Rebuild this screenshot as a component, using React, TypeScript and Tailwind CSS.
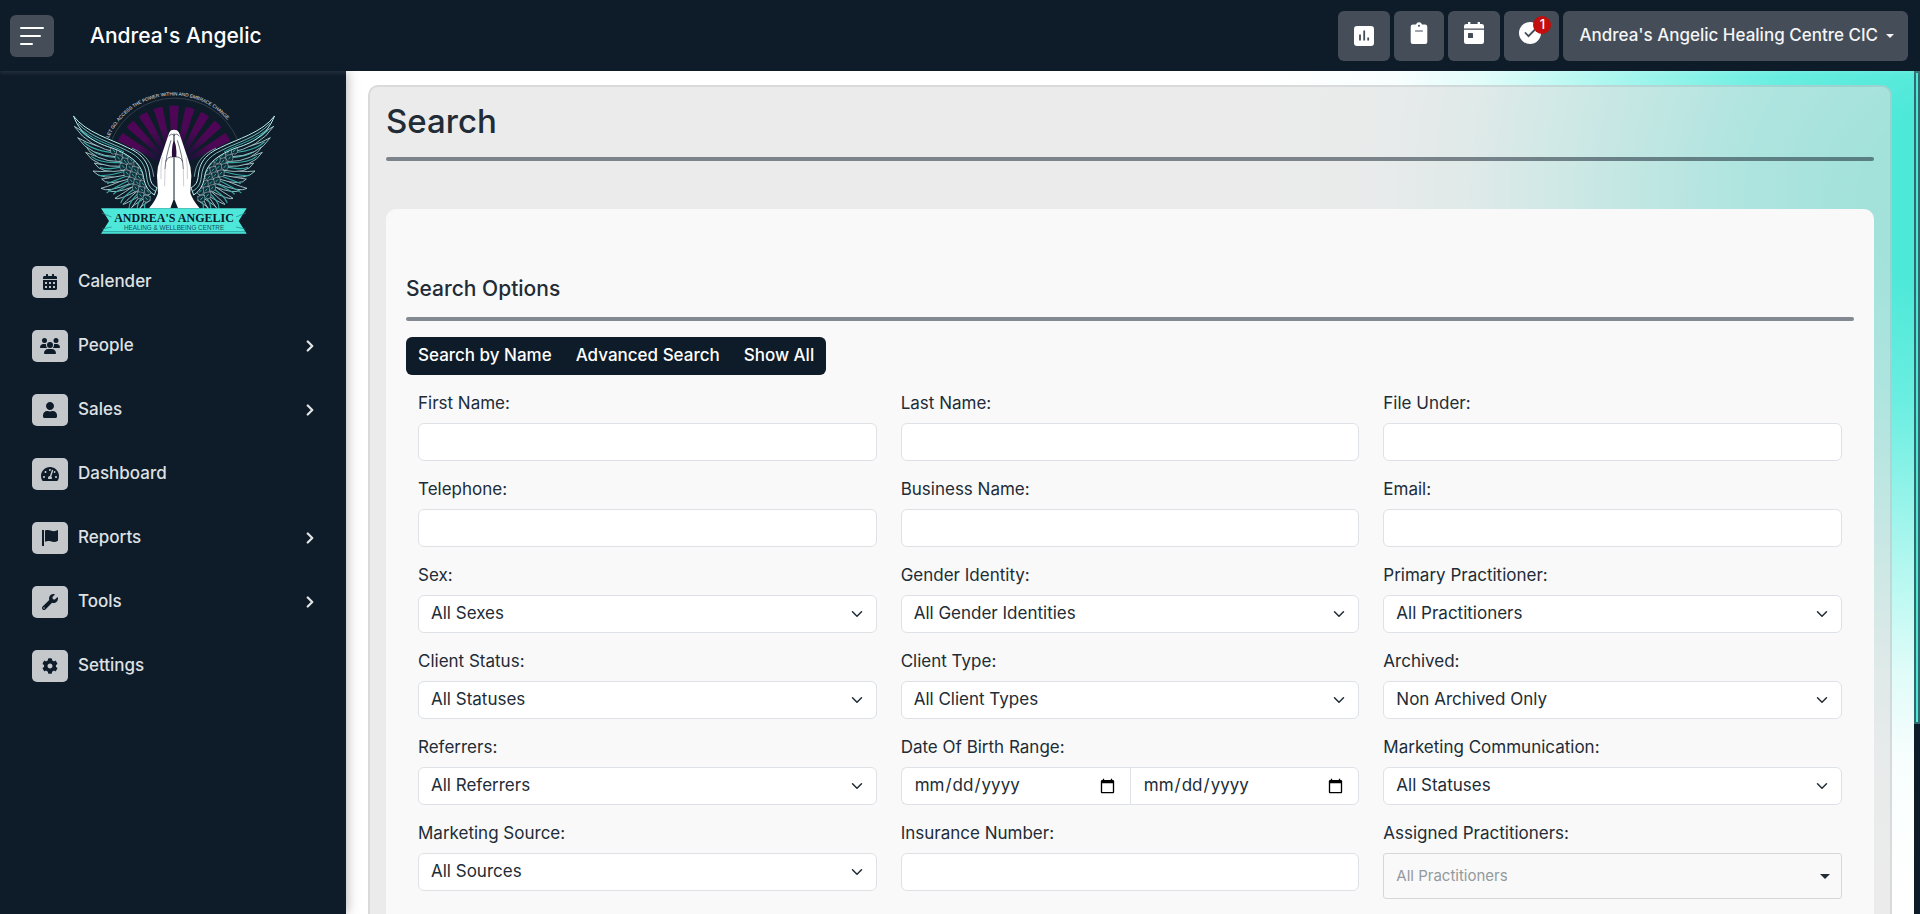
import { useState } from "react";
import type { ReactNode } from "react";
import { FaCalendarAlt, FaCog, FaTachometerAlt, FaUser, FaWrench } from "react-icons/fa";
import { FaUsers } from "react-icons/fa6";

type NavItem = { label: string; icon: ReactNode; hasChildren?: boolean };

type FieldDef = {
  id: string;
  label: string;
  type: "text" | "select" | "dates" | "multi";
  value?: string;
};

const NAV_ITEMS: NavItem[] = [
  { label: "Calender", icon: <FaCalendarAlt /> },
  { label: "People", icon: <FaUsers className="text-xl" />, hasChildren: true },
  { label: "Sales", icon: <FaUser />, hasChildren: true },
  { label: "Dashboard", icon: <FaTachometerAlt className="text-lg" /> },
  { label: "Reports", icon: <FlagIcon />, hasChildren: true },
  { label: "Tools", icon: <FaWrench />, hasChildren: true },
  { label: "Settings", icon: <FaCog /> },
];

const FIELDS: FieldDef[] = [
  { id: "first-name", label: "First Name:", type: "text" },
  { id: "last-name", label: "Last Name:", type: "text" },
  { id: "file-under", label: "File Under:", type: "text" },
  { id: "telephone", label: "Telephone:", type: "text" },
  { id: "business-name", label: "Business Name:", type: "text" },
  { id: "email", label: "Email:", type: "text" },
  { id: "sex", label: "Sex:", type: "select", value: "All Sexes" },
  { id: "gender", label: "Gender Identity:", type: "select", value: "All Gender Identities" },
  { id: "primary", label: "Primary Practitioner:", type: "select", value: "All Practitioners" },
  { id: "status", label: "Client Status:", type: "select", value: "All Statuses" },
  { id: "type", label: "Client Type:", type: "select", value: "All Client Types" },
  { id: "archived", label: "Archived:", type: "select", value: "Non Archived Only" },
  { id: "referrers", label: "Referrers:", type: "select", value: "All Referrers" },
  { id: "dob", label: "Date Of Birth Range:", type: "dates" },
  { id: "marketing", label: "Marketing Communication:", type: "select", value: "All Statuses" },
  { id: "source", label: "Marketing Source:", type: "select", value: "All Sources" },
  { id: "insurance", label: "Insurance Number:", type: "text" },
  { id: "assigned", label: "Assigned Practitioners:", type: "multi", value: "All Practitioners" },
];

const TABS = ["Search by Name", "Advanced Search", "Show All"];

/* ---------- icons ---------- */

function FlagIcon() {
  return (
    <svg width="16" height="16" viewBox="0 0 16 16" fill="currentColor">
      <path d="M0 0h2v16H0z" />
      <path d="M3 .6c2.200-.8 4.300-.5 6.200.1 2.300.7 4.500.6 6.800-.7v10.800c-2.300 1.400-4.600 1.400-6.800.7-2-.6-4-.7-6.200.2z" />
    </svg>
  );
}

function ChartIcon() {
  return (
    <svg width="20" height="20" viewBox="0 0 20 20">
      <rect width="20" height="20" rx="3" fill="#fff" />
      <path d="M6 8.500v6M10.200 4.500v10M14.200 11.500v3" stroke="#444d58" strokeWidth="1.800" />
    </svg>
  );
}

function ClipboardIcon() {
  return (
    <svg width="18" height="22" viewBox="0 0 18 22">
      <path d="M3 2.500h3a3.100 3.100 0 0 1 6 0h3a2.300 2.300 0 0 1 2.300 2.300V20A2 2 0 0 1 15.300 22H2.700a2 2 0 0 1-2-2V4.800A2.300 2.300 0 0 1 3 2.500z" fill="#fff" />
      <circle cx="9" cy="3.800" r="1" fill="#444d58" />
      <path d="M5.500 9h7" stroke="#444d58" strokeWidth="1" strokeLinecap="round" />
    </svg>
  );
}

function EventIcon() {
  return (
    <svg width="20" height="22" viewBox="0 0 20 22">
      <path d="M2.300 2H4V.8a1.200 1.200 0 0 1 2.400 0V2h7.200V.8a1.200 1.200 0 0 1 2.400 0V2h1.700A2.300 2.300 0 0 1 20 4.300v2.300H0V4.300A2.300 2.300 0 0 1 2.300 2z" fill="#fff" />
      <path d="M0 7.700h20v12a2.300 2.300 0 0 1-2.300 2.300H2.300A2.300 2.300 0 0 1 0 19.700z" fill="#fff" />
      <rect x="4" y="11" width="5" height="5" rx=".6" fill="#444d58" />
    </svg>
  );
}

function CheckIcon() {
  return (
    <svg width="22" height="22" viewBox="0 0 22 22">
      <circle cx="11" cy="11" r="11" fill="#fff" />
      <path d="M6.500 11l3 3.200 6-6.200" fill="none" stroke="#444d58" strokeWidth="1.800" strokeLinecap="round" />
    </svg>
  );
}

function Chevron({ className }: { className?: string }) {
  return (
    <svg className={className} width="16" height="16" viewBox="0 0 16 16" fill="none" stroke="currentColor" strokeWidth="2" strokeLinecap="round" strokeLinejoin="round">
      <path d="M2 5l6 6 6-6" />
    </svg>
  );
}

/* ---------- logo ---------- */

// tip x/y, root x/y, sag of the feather (drawn bottom to top)
const FEATHERS = [
  [238, 376, 268, 336, 2],
  [212, 374, 256, 326, 3],
  [186, 364, 244, 318, 5],
  [162, 346, 232, 306, 7],
  [140, 320, 220, 294, 9],
  [120, 316, 212, 284, 10],
  [122, 288, 204, 272, 10],
  [96, 264, 196, 260, 12],
  [100, 240, 190, 246, 12],
  [74, 208, 184, 234, 14],
  [70, 184, 178, 220, 14],
  [50, 164, 172, 206, 14],
  [40, 130, 176, 194, 12],
];

const SCALES = [
  [160, 200], [178, 204], [196, 214], [174, 222], [194, 232], [212, 228], [230, 240],
  [188, 248], [208, 250], [224, 258], [242, 262], [200, 268], [218, 274], [236, 280],
  [212, 290], [230, 296], [248, 300], [226, 312], [244, 318], [262, 322], [240, 334],
  [258, 344],
];

function Wing() {
  return (
    <g fill="none" strokeLinecap="round" strokeLinejoin="round">
      {FEATHERS.map(([tx, ty, rx, ry, sag]) => {
        const mx = (tx + rx) / 2;
        const my = (ty + ry) / 2 + sag;
        return (
          <g key={`${tx}-${ty}`}>
            <path d={`M${rx} ${ry - 6}Q${mx - 8} ${my - 4} ${tx} ${ty}Q${mx - 26} ${my + 20} ${rx} ${ry + 16}`} fill="#0e1b29" stroke="#b4dfdc" strokeWidth="2.500" />
            <path d={`M${rx} ${ry + 4}Q${mx - 12} ${my + 7} ${tx + 18} ${ty + 13}`} stroke="#37a9a5" strokeWidth="3.500" />
          </g>
        );
      })}
      {SCALES.map(([x, y]) => (
        <g key={`${x}-${y}`}>
          <path d={`M${x - 10} ${y - 7}q-5 13 3 20q13 2 18-11q-4-11-21-9z`} fill="#10303b" stroke="#a3b9bd" strokeWidth="1.800" />
          <path d={`M${x - 4} ${y}l5 6`} stroke="#37a9a5" strokeWidth="3" />
        </g>
      ))}
      {/* leading edge */}
      <path d="M38 100C76 150 150 168 200 194C246 214 262 240 266 276C268 300 276 308 288 314L280 336C256 320 250 300 246 274C238 240 204 214 156 196C110 182 60 160 38 100z" fill="#0e1b29" stroke="#b9eeea" strokeWidth="3" />
      <path d="M52 122C90 164 150 178 196 202C240 222 254 248 257 282C260 306 268 316 282 324" stroke="#8fe0d9" strokeWidth="2.500" />
      <path d="M66 144C110 178 150 184 188 206" stroke="#37a9a5" strokeWidth="3" />
      <path d="M214 196C256 214 274 242 278 280" stroke="#9fdad6" strokeWidth="2" />
    </g>
  );
}

function Logo() {
  return (
    <svg className="mx-auto" width="225" height="155" viewBox="0 0 675 465" role="img" aria-label="Andrea's Angelic">
      <defs>
        <radialGradient id="ray" gradientUnits="userSpaceOnUse" cx="339" cy="255" r="190">
          <stop offset=".3" stopColor="#1a1238" />
          <stop offset=".65" stopColor="#4b0853" />
          <stop offset="1" stopColor="#500557" />
        </radialGradient>
        <path id="motto" d="M143 165A213 213 0 0 1 548 214" />
      </defs>
      {[-60, -45, -30, -15, 0, 15, 30, 45, 60].map((deg) => (
        <path key={deg} d="M334 215L325 69Q339 66 353 69L344 215z" fill="url(#ray)" transform={`rotate(${deg} 339 255)`} />
      ))}
      <path d="M152 171A205 205 0 0 1 530 171" fill="none" stroke="#59636b" strokeWidth="1.500" />
      <text fill="#e3e6e8" className="font-[Liberation_Sans] text-[14px]">
        <textPath href="#motto">LET GO, ACCESS THE POWER WITHIN AND EMBRACE CHANGE.</textPath>
      </text>
      <Wing />
      <g transform="translate(678 0) scale(-1 1)">
        <Wing />
      </g>
      {/* praying hands */}
      <path d="M330 142Q339 138 348 142Q354 146 356 154L381 228Q391 252 391 278L388 330Q394 350 416 376H264Q286 350 291 330L288 278Q288 252 298 228L323 154Q325 146 330 142z" fill="#fff" />
      <path d="M339 172Q331 190 333 222H346Q348 190 339 172z" fill="#2a0b3b" />
      <path d="M339 152V180M339 222V348" stroke="#0e1b29" strokeWidth="3" />
      <path d="M339 346L328 376H351z" fill="#0e1b29" />
      <path d="M324 160Q332 148 339 158Q347 148 355 160M330 172Q314 222 312 258M349 172Q365 222 367 258M314 236Q320 220 336 222M365 236Q359 220 343 222" fill="none" stroke="#26303c" strokeWidth="2" />
      <path d="M312 258L311 310M367 258L368 310M304 222Q298 250 300 288M375 222Q381 250 379 288" fill="none" stroke="#9aa1a8" strokeWidth="1.500" />
      {/* ribbon */}
      <path d="M120 376H557L533 414L557 452H120L144 414z" fill="#4de8da" />
      <path d="M124 446H553M122 390L152 402M124 438L152 432M555 390L525 402M553 438L525 432" stroke="#1f7f83" strokeWidth="2" />
      <text x="339" y="416" textAnchor="middle" fill="#0e1b29" className="font-[Liberation_Serif] text-[36px] font-bold">
        ANDREA'S ANGELIC
      </text>
      <text x="339" y="440" textAnchor="middle" fill="#14505a" className="font-[Liberation_Sans] text-[19px]">
        HEALING &amp; WELLBEING CENTRE
      </text>
    </svg>
  );
}

/* ---------- layout ---------- */

function Header({ onToggle }: { onToggle: () => void }) {
  return (
    <header className="z-20 flex h-[71px] shrink-0 items-center justify-between bg-[#0e1b29] pr-3 pl-[10px] text-white shadow-[0_2px_4px_rgba(255,255,255,0.1)]">
      <div className="flex items-center gap-9">
        <button onClick={onToggle} aria-label="Toggle menu" className="flex h-[42px] w-11 flex-col justify-center gap-[6px] rounded-md bg-[#444d58] pl-[10px]">
          <span className="h-[2px] w-6 rounded-full bg-white" />
          <span className="h-[2px] w-[21px] rounded-full bg-white" />
          <span className="h-[2px] w-[13px] rounded-full bg-white" />
        </button>
        <a href="#" className="text-[21px] font-medium">Andrea's Angelic</a>
      </div>

      <div className="flex gap-1">
        <button aria-label="Statistics" className="flex h-[50px] w-[52px] items-center justify-center rounded-md bg-[#444d58]">
          <ChartIcon />
        </button>
        <button aria-label="Clipboard" className="flex h-[50px] w-[50px] items-center justify-center rounded-md bg-[#444d58] pb-[6px]">
          <ClipboardIcon />
        </button>
        <button aria-label="Diary" className="flex h-[50px] w-[52px] items-center justify-center rounded-md bg-[#444d58] pb-[6px]">
          <EventIcon />
        </button>
        <button aria-label="Tasks" className="relative flex h-[50px] w-[55px] items-center rounded-md bg-[#444d58] pb-[6px] pl-[15px]">
          <CheckIcon />
          <span className="absolute top-[5px] right-2 flex h-[18px] w-[18px] items-center justify-center rounded-full bg-[#c40d0d] text-[13px] font-medium">
            1
          </span>
        </button>
        <button className="flex h-[50px] items-center gap-2 rounded-md bg-[#444d58] pr-[14px] pl-4 text-[17px] font-medium text-[#f4f5f6]">
          Andrea's Angelic Healing Centre CIC
          <svg width="8" height="4" viewBox="0 0 8 4" fill="currentColor">
            <path d="M0 0h8L4 4z" />
          </svg>
        </button>
      </div>
    </header>
  );
}

function Sidebar() {
  return (
    <aside className="z-10 w-[346px] shrink-0 bg-[#0e1b29] pt-3 shadow-[0_0_12px_rgba(0,0,0,0.35)]">
      <Logo />
      <nav className="mt-3 pr-[30px] pl-8">
        {NAV_ITEMS.map((item) => (
          <a key={item.label} href="#" className="flex h-16 items-center gap-[10px] text-[17px] font-medium text-[#dfe1e3]">
            <span className="flex h-8 w-9 items-center justify-center rounded-[5px] bg-[#c5c8cb] text-base text-[#0e1b29]">
              {item.icon}
            </span>
            {item.label}
            {item.hasChildren && <Chevron className="ml-auto h-3 w-3 -rotate-90 stroke-[3]" />}
          </a>
        ))}
      </nav>
    </aside>
  );
}

function Field({ field }: { field: FieldDef }) {
  const box = "h-[38px] w-full border border-[#dee2e6] bg-white px-3 text-[17px] text-[#212c36]";

  return (
    <div>
      <label htmlFor={field.id} className="mb-2 block text-[17px] leading-6">
        {field.label}
      </label>
      {field.type === "text" && <input id={field.id} type="text" className={`${box} block rounded-md`} />}
      {field.type === "select" && (
        <div className="relative">
          <select id={field.id} className={`${box} block appearance-none rounded-md`}>
            <option>{field.value}</option>
          </select>
          <Chevron className="pointer-events-none absolute top-[13px] right-[14px] h-3 w-3" />
        </div>
      )}
      {field.type === "dates" && (
        <div className="flex">
          <input id={field.id} type="date" className={`${box} min-w-0 rounded-l-md border-r-0`} />
          <input type="date" aria-label="Date Of Birth Range to" className={`${box} min-w-0 rounded-r-md`} />
        </div>
      )}
      {field.type === "multi" && (
        <div className="relative">
          <select id={field.id} className="block h-[46px] w-full appearance-none rounded-[3px] border border-[#d5d8da] bg-[#f9f9f9] px-3 text-[15px] text-[#93999e]">
            <option>{field.value}</option>
          </select>
          <svg className="pointer-events-none absolute top-[21px] right-3" width="10" height="5" viewBox="0 0 10 5" fill="#212c36">
            <path d="M0 0h10L5 5z" />
          </svg>
        </div>
      )}
    </div>
  );
}

export default function App() {
  const [isOpen, setIsOpen] = useState(true);

  return (
    <div className="flex h-screen flex-col overflow-hidden bg-white font-[Inter,sans-serif] text-[#212c36]">
      <Header onToggle={() => setIsOpen(!isOpen)} />

      <div className="flex min-h-0 flex-1">
        {isOpen && <Sidebar />}

        <main className="min-w-0 flex-1 overflow-hidden bg-[radial-gradient(44%_82%_at_102%_15%,#4ce8d8_0%,#4ce8d8_12%,#6aeee1_30%,#92f3e9_43%,#bff9f3_58%,#e0fcf9_69%,#f8fefe_82%,#ffffff_100%)] px-[22px] pt-[14px]">
          <div className="rounded-[10px] border-2 border-[#0e1b29]/8 bg-[#dedede]/60 p-4 pb-8">
            <h1 className="mb-[18px] text-[33px] leading-9 font-medium">Search</h1>
            <hr className="h-1 rounded-sm border-0 bg-[#0e1b29]/50" />

            <section className="mt-12 rounded-[10px] bg-[#f9f9f9] px-5 pt-16 pb-10">
              <h2 className="mb-3 text-[21px] leading-8 font-medium">Search Options</h2>
              <hr className="h-1 rounded-sm border-0 bg-[#0e1b29]/50" />

              <div className="mt-4 flex">
                <div className="flex h-[38px] items-center gap-6 rounded-md bg-[#0e1b29] px-3 text-[17px] font-medium text-white">
                  {TABS.map((tab) => (
                    <button key={tab}>{tab}</button>
                  ))}
                </div>
              </div>

              <form className="mt-4 grid grid-cols-3 gap-x-6 gap-y-4 px-3">
                {FIELDS.map((field) => (
                  <Field key={field.id} field={field} />
                ))}
              </form>
            </section>
          </div>
        </main>

        {/* Scroll track */}
        <div className="w-[6px] shrink-0 bg-[#0e1b29]">
          <div className="h-[77.5%] border-2 border-[#2f6b6e] bg-[#4ce8d8]" />
        </div>
      </div>
    </div>
  );
}
